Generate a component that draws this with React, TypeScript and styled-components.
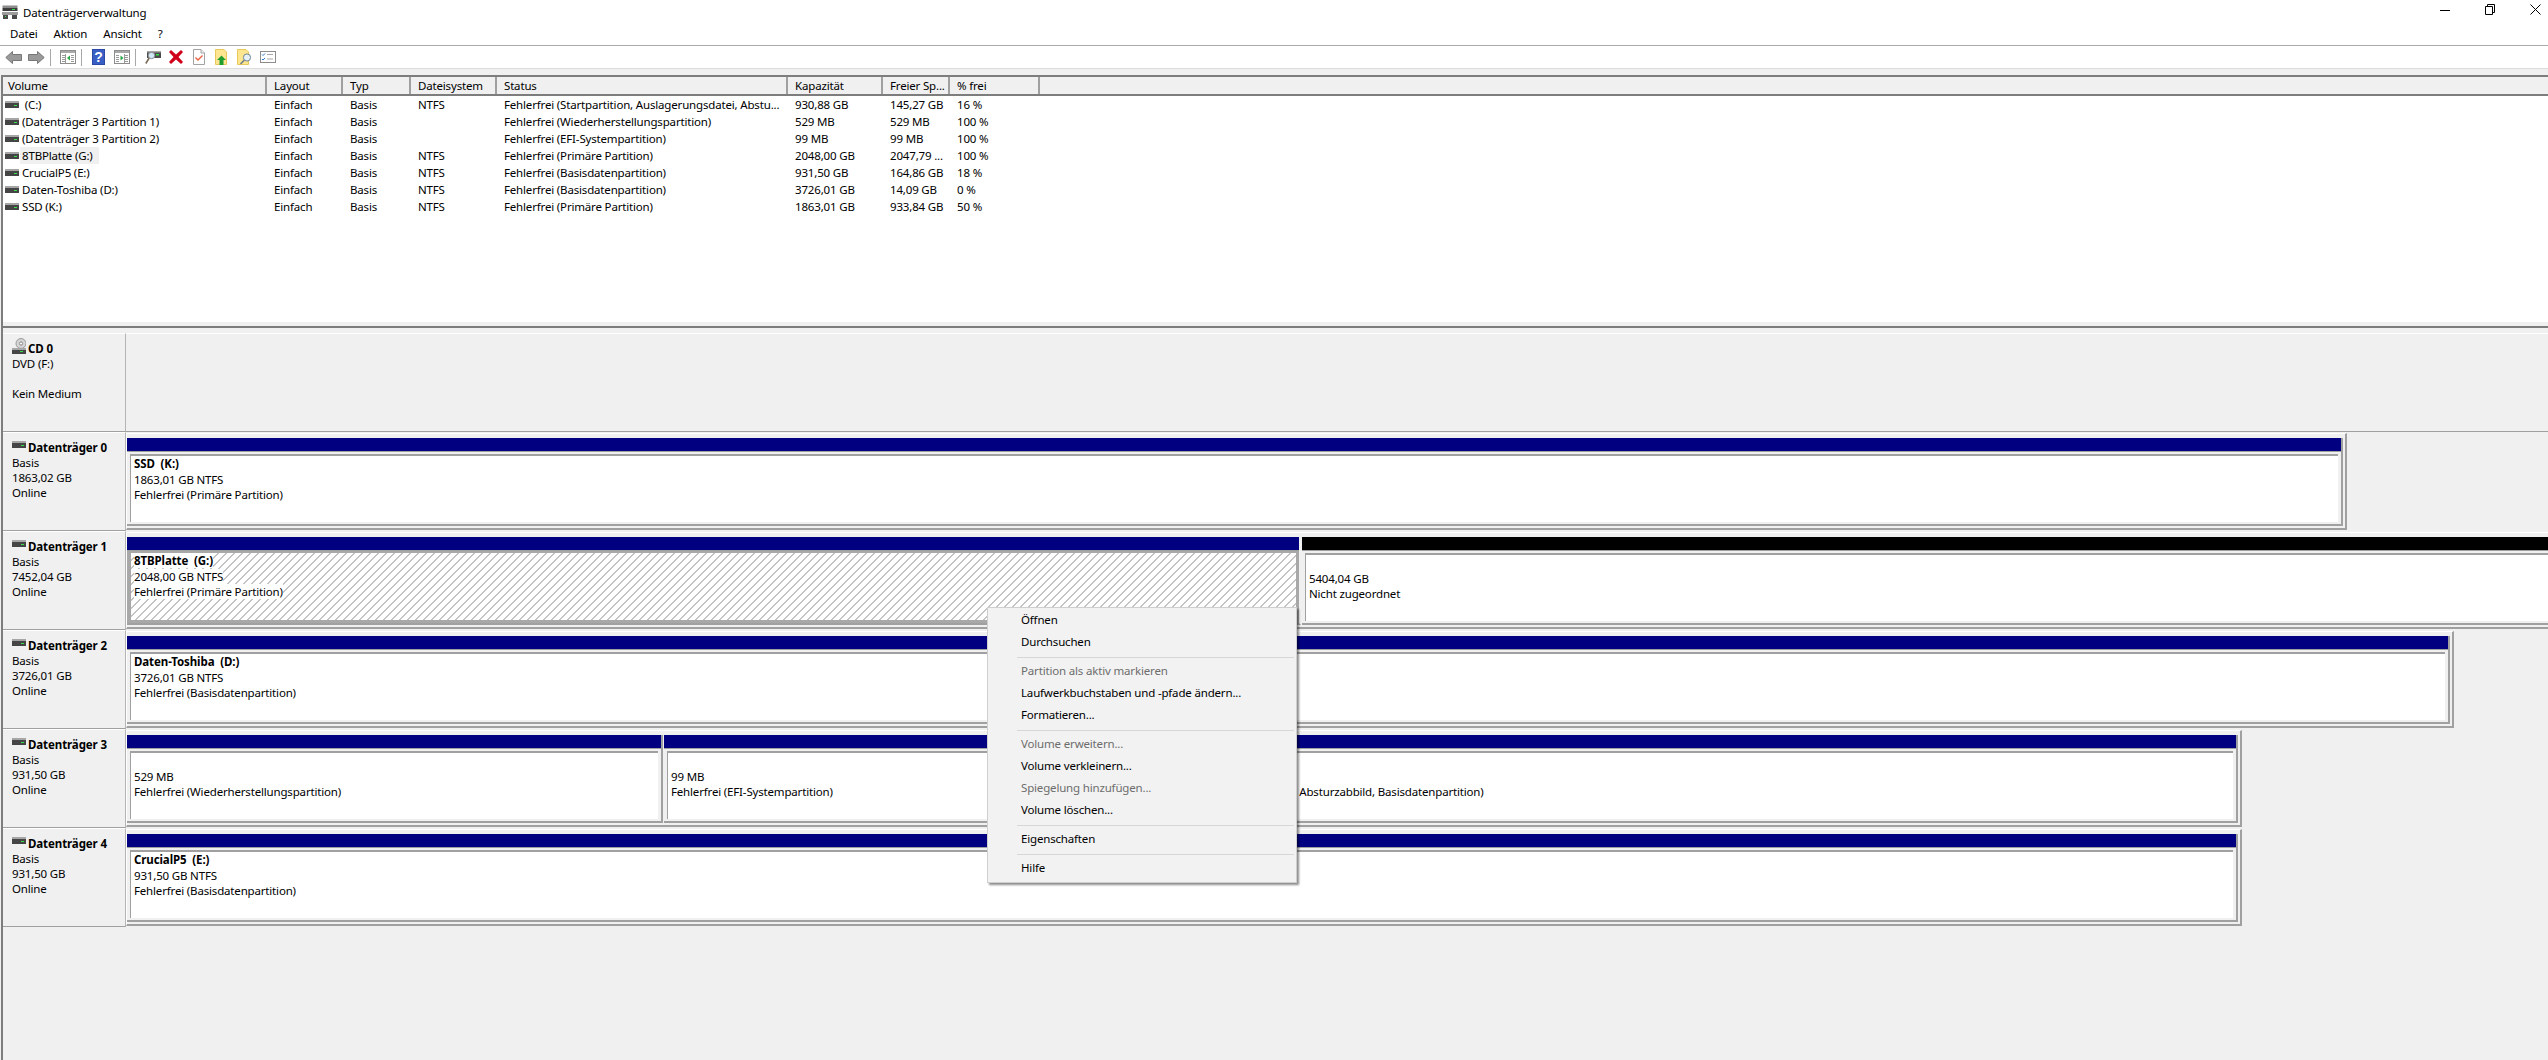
import React from "react";
import styled, { createGlobalStyle } from "styled-components";

const FONT = `"Noto Sans", "Open Sans", sans-serif`;
const LINE = "#a0a0a0";
const DARK = "#7d7d7d";
const PANEL = "#f0f0f0";

const Global = createGlobalStyle`
  html, body { margin: 0; padding: 0; background: ${PANEL}; overflow: hidden; }
  * { box-sizing: border-box; }
  #root { width: 2548px; height: 1060px; }
`;

const Window = styled.div`
  position: relative;
  width: 2548px;
  height: 1060px;
  overflow: hidden;
  background: ${PANEL};
  color: #000;
  font: 11.5px/15px ${FONT};
  letter-spacing: -0.17px;
  display: flex;
  flex-direction: column;
`;

const TitleBar = styled.div`
  height: 24px;
  background: #fff;
  display: flex;
  align-items: center;
  padding: 0 5px 0 2px;
  gap: 5px;
`;
const TitleText = styled.span`
  flex: 1;
`;
const WinButtons = styled.div`
  display: flex;
  gap: 29px;
  height: 24px;
`;
const WinButton = styled.div`
  width: 16px;
  height: 24px;
  display: flex;
  align-items: flex-start;
  justify-content: center;
  padding-top: 4px;
`;
const MenuBar = styled.div`
  height: 22px;
  background: #fff;
  border-bottom: 1px solid #ababab;
  display: flex;
  gap: 16px;
  padding: 2px 0 0 10px;
`;
const MenuLabel = styled.span``;

const Toolbar = styled.div`
  height: 23px;
  background: #fff;
  border-bottom: 1px solid #dcdcdc;
  display: flex;
  align-items: center;
  padding-left: 2px;
`;
const ToolButton = styled.div`
  width: 23px;
  height: 22px;
  display: flex;
  align-items: center;
  justify-content: center;
`;
const ToolSep = styled.div`
  width: 1px;
  height: 17px;
  background: #a8a8a8;
  margin: 0 5px 0 2px;
`;

const Body = styled.div`
  flex: 1;
  margin: 6px 0 0 1px;
  border-left: 2px solid ${DARK};
  border-top: 2px solid ${DARK};
  display: flex;
  flex-direction: column;
  min-height: 0;
`;
const ListPane = styled.div`
  height: 245px;
  background: #fff;
  display: flex;
  flex-direction: column;
`;
const Header = styled.div`
  height: 19px;
  background: ${PANEL};
  border-bottom: 2px solid ${DARK};
  display: flex;
`;
const HeaderCell = styled.div<{ $w: number }>`
  width: ${(p) => p.$w}px;
  flex: none;
  padding-left: ${(p) => (p.$w > 200 && p.$w < 280 ? 5 : 7)}px;
  border-right: 2px solid ${LINE};
  line-height: 18px;
  white-space: nowrap;
`;
const Rows = styled.div``;
const Row = styled.div`
  height: 17px;
  display: flex;
  align-items: center;
`;
const Cell = styled.div<{ $w: number }>`
  width: ${(p) => p.$w}px;
  flex: none;
  padding-left: 7px;
  white-space: pre;
`;
const VolumeCell = styled.div<{ $w: number }>`
  width: ${(p) => p.$w}px;
  flex: none;
  padding-left: 2px;
  display: flex;
  align-items: center;
  white-space: pre;
`;
const VolumeName = styled.span<{ $selected?: boolean }>`
  margin-left: 1px;
  padding: 1px 6px 1px 2px;
  background: ${(p) => (p.$selected ? PANEL : "transparent")};
`;

const Splitter = styled.div`
  height: 11px;
  padding-top: 4px;
  &::before {
    content: "";
    display: block;
    height: 2px;
    background: ${DARK};
  }
`;

const DiskPane = styled.div`
  flex: 1;
  display: flex;
  flex-direction: column;
`;
const DiskRow = styled.div`
  height: 99px;
  display: flex;
  flex: none;
`;
const DiskLabel = styled.div`
  width: 123px;
  flex: none;
  border-top: 1px solid #fff;
  border-right: 1px solid #b4b4b4;
  border-bottom: 1px solid ${LINE};
  padding: 7px 0 0 9px;
`;
const DiskTitle = styled.div`
  display: flex;
  align-items: center;
  font-weight: 700;
  gap: 2px;
  height: 16px;
  margin-top: -1px;
  letter-spacing: -0.1px;
`;
const TitleIcon = styled.span<{ $cd?: boolean }>`
  display: flex;
  align-self: flex-start;
  margin-top: ${(p) => (p.$cd ? -2 : 2)}px;
`;
const DiskLine = styled.div`
  height: 15px;
  white-space: pre;
`;
const DiskArea = styled.div<{ $empty?: boolean }>`
  flex: 1;
  min-width: 0;
  overflow: hidden;
  border-top: ${(p) => (p.$empty ? "1px solid #fff" : "0")};
  border-bottom: ${(p) => (p.$empty ? `1px solid ${LINE}` : "0")};
`;
const Frame = styled.div`
  display: inline-flex;
  margin-top: 1px;
  height: 97px;
  border-top: 1px solid #fff;
  border-left: 1px solid #fff;
  border-right: 2px solid ${LINE};
  border-bottom: 2px solid ${LINE};
  padding: 4px 2px 2px 0;
`;
const Partition = styled.div<{ $w: number; $selected?: boolean; $gap?: boolean }>`
  box-sizing: content-box;
  width: ${(p) => p.$w}px;
  flex: none;
  display: flex;
  flex-direction: column;
  border-right: 2px solid ${(p) => (p.$selected ? "transparent" : LINE)};
  border-bottom: 2px solid ${LINE};
  margin-right: ${(p) => (p.$gap ? 1 : 0)}px;
`;
const PartitionBar = styled.div<{ $free?: boolean }>`
  height: 14px;
  flex: none;
  background: ${(p) => (p.$free ? "#000" : "#000080")};
  border-bottom: 1px solid ${LINE};
`;
const PartitionBox = styled.div<{ $selected?: boolean }>`
  flex: 1;
  min-height: 0;
  overflow: hidden;
  white-space: pre;
  margin: ${(p) => (p.$selected ? "0" : "2px 3px 2px 3px")};
  border-style: solid;
  border-color: ${(p) => (p.$selected ? "#a8a8a8" : LINE)};
  border-width: ${(p) => (p.$selected ? "2px 3px 3px 4px" : "2px 0 0 1px")};
  padding: 1px 0 0 3px;
  background-color: #fff;
  background-image: ${(p) =>
    p.$selected
      ? "linear-gradient(-45deg, #c4c4c4 12.5%, #fff 12.5%, #fff 50%, #c4c4c4 50%, #c4c4c4 62.5%, #fff 62.5%, #fff 100%)"
      : "none"};
  background-size: 8px 8px;
`;
const PartitionLine = styled.div<{ $bold?: boolean }>`
  height: ${(p) => (p.$bold ? 16 : 15)}px;
  margin-top: ${(p) => (p.$bold ? -1 : 0)}px;
`;
const PartitionText = styled.span<{ $bold?: boolean }>`
  background: #fff;
  font-weight: ${(p) => (p.$bold ? 700 : 400)};
  letter-spacing: ${(p) => (p.$bold ? "-0.1px" : "inherit")};
`;

const ContextMenu = styled.div`
  position: absolute;
  left: 987px;
  top: 607px;
  width: 310px;
  height: 276px;
  background: #f2f2f2;
  border: 1px solid #cfcfcf;
  box-shadow: 2px 2px 2px rgba(0, 0, 0, 0.45);
  padding: 2px 2px 0 0;
`;
const MenuEntry = styled.div<{ $disabled?: boolean }>`
  height: 22px;
  line-height: 20px;
  padding-left: 33px;
  color: ${(p) => (p.$disabled ? "#6d6d6d" : "#000")};
`;
const MenuSep = styled.div`
  height: 7px;
  margin-left: 29px;
  padding-top: 3px;
  &::before {
    content: "";
    display: block;
    height: 1px;
    background: #d7d7d7;
  }
`;

/* ---------- drawings ---------- */
const DiskIcon = () => (
  <svg width="14" height="7" viewBox="0 0 14 7">
    <rect width="14" height="2" fill="#a6a6a6" />
    <rect y="2" width="14" height="5" fill="#454545" />
    <rect x="9" y="4" width="3" height="1" fill="#35e04a" />
  </svg>
);
const CdIcon = () => (
  <svg width="14" height="16" viewBox="0 0 14 16">
    <circle cx="9" cy="5.5" r="5" fill="#d4d4d4" stroke="#9a9a9a" />
    <circle cx="9" cy="5.5" r="1.6" fill="#fafafa" stroke="#8a8a8a" />
    <rect x="0" y="10" width="14" height="2" fill="#a6a6a6" />
    <rect x="0" y="12" width="14" height="4" fill="#454545" />
    <rect x="8" y="13" width="3" height="1" fill="#35e04a" />
  </svg>
);
const AppIcon = () => (
  <svg width="16" height="14" viewBox="0 0 16 14">
    <rect x="0.5" y="0.5" width="15" height="2.5" fill="#8c8c8c" />
    <rect x="0.5" y="3" width="15" height="3" fill="#3c3c3c" />
    <rect x="10" y="4" width="3" height="1" fill="#35e04a" />
    <rect x="0" y="7" width="16" height="3" fill="#9c9c9c" />
    <rect x="1" y="10" width="5" height="4" fill="#4a4a4a" />
    <rect x="10" y="10" width="5" height="4" fill="#4a4a4a" />
    <rect x="3" y="11" width="1" height="1" fill="#35e04a" />
  </svg>
);
const ArrowIcon = ({ flip }: { flip?: boolean }) => (
  <svg width="17" height="13" viewBox="0 0 17 13" style={flip ? { transform: "scaleX(-1)" } : undefined}>
    <path d="M7.5 .5 L.8 6.5 L7.5 12.5 V9.5 H16.5 V3.5 H7.5 Z" fill="#9a9a9a" stroke="#777" />
  </svg>
);
const PaneIcon = ({ right }: { right?: boolean }) => (
  <svg width="16" height="14" viewBox="0 0 16 14">
    <rect x=".5" y=".5" width="15" height="13" fill="#fff" stroke="#8d8d8d" />
    <rect x="1" y="1" width="14" height="2" fill="#a9a9a9" />
    <path
      d={right ? "M2 5.500h3M2 7.500h3M2 9.500h3M2 11.500h3M11 5.500h3M11 7.500h3M11 9.500h3M11 11.500h3M10.500 4v9" : "M2 5.500h3M2 7.500h3M2 9.500h3M2 11.500h3M11 5.500h3M11 7.500h3M11 9.500h3M11 11.500h3M5.500 4v9"}
      stroke="#9a9a9a"
      fill="none"
    />
    <path d={right ? "M6.500 5.500l3 2.500-3 2.500z" : "M10 5.500l-3 2.500 3 2.500z"} fill="#27a844" />
  </svg>
);
const HelpIcon = () => (
  <svg width="13" height="16" viewBox="0 0 13 16">
    <rect width="13" height="16" fill="#2a4aa8" />
    <rect x="1" y="1" width="11" height="14" fill="#3a5fc4" />
    <text x="6.500" y="13" fontSize="14" fontWeight="700" fill="#fff" textAnchor="middle" fontFamily="Liberation Sans">?</text>
  </svg>
);
const DiskSearchIcon = () => (
  <svg width="16" height="15" viewBox="0 0 16 15">
    <rect x="2" y="1" width="14" height="7" fill="#4a4a4a" />
    <rect x="2" y="1" width="14" height="1.500" fill="#a6a6a6" />
    <rect x="11" y="4" width="3" height="1.500" fill="#35e04a" />
    <circle cx="6.500" cy="5.500" r="3.200" fill="#cfe7f7" stroke="#8d8d8d" />
    <path d="M4.200 8L.8 13.500" stroke="#7a6a5a" strokeWidth="1.600" />
  </svg>
);
const DeleteIcon = () => (
  <svg width="14" height="14" viewBox="0 0 14 14">
    <path d="M0 2L2 0 7 4.500 12 0 14 2 9.500 7 14 12 12 14 7 9.500 2 14 0 12 4.500 7z" fill="#d0021b" />
  </svg>
);
const DocCheckIcon = () => (
  <svg width="12" height="16" viewBox="0 0 12 16">
    <path d="M.5.5H8L11.500 4V15.500H.5Z" fill="#fff" stroke="#a3a3a3" />
    <path d="M8 .5V4H11.500" fill="#eee" stroke="#a3a3a3" />
    <path d="M2.500 8.500L5 11 9.500 6.500" fill="none" stroke="#e8603c" strokeWidth="1.400" />
  </svg>
);
const FolderBase = () => (
  <path d="M.5.5H9L11.500 3V15.500H.5Z" fill="#fde68f" stroke="#e8c85a" />
);
const FolderUpIcon = () => (
  <svg width="13" height="16" viewBox="0 0 13 16">
    <FolderBase />
    <path d="M6.500 6.500L11 11H8.500V16H4.500V11H2Z" fill="#1f9d2e" />
  </svg>
);
const FolderSearchIcon = () => (
  <svg width="15" height="16" viewBox="0 0 15 16">
    <FolderBase />
    <circle cx="10" cy="8.500" r="3.600" fill="#e7f0f6" stroke="#6f8696" />
    <path d="M7.200 11.300L3.500 15" stroke="#6f7e88" strokeWidth="1.600" />
  </svg>
);
const ChecklistIcon = () => (
  <svg width="16" height="12" viewBox="0 0 16 12">
    <rect x=".5" y=".5" width="15" height="11" fill="#fff" stroke="#8d8d8d" />
    <path d="M2 3.500l1 1 2-2M2 8l1 1 2-2" fill="none" stroke="#2b79d1" />
    <path d="M7 3.500h6M7 8h6" stroke="#a8a8a8" />
  </svg>
);
const MinimizeIcon = () => (
  <svg width="10" height="12" viewBox="0 0 10 12">
    <path d="M0 6.500H10" stroke="#000" />
  </svg>
);
const RestoreIcon = () => (
  <svg width="10" height="11" viewBox="0 0 10 11">
    <path d="M.5 2.500h7v8h-7z M2.500 2.500v-2h7v8h-2" fill="none" stroke="#000" />
  </svg>
);
const CloseIcon = () => (
  <svg width="11" height="11" viewBox="0 0 11 11">
    <path d="M.5.5l10 10M10.500.5l-10 10" stroke="#000" />
  </svg>
);

/* ---------- data ---------- */
const COLS = [264, 76, 68, 86, 291, 95, 67, 90];
const HEADS = ["Volume", "Layout", "Typ", "Dateisystem", "Status", "Kapazität", "Freier Sp...", "% frei"];
const VOLUMES: string[][] = [
  [" (C:)", "Einfach", "Basis", "NTFS", "Fehlerfrei (Startpartition, Auslagerungsdatei, Abstu...", "930,88 GB", "145,27 GB", "16 %"],
  ["(Datenträger 3 Partition 1)", "Einfach", "Basis", "", "Fehlerfrei (Wiederherstellungspartition)", "529 MB", "529 MB", "100 %"],
  ["(Datenträger 3 Partition 2)", "Einfach", "Basis", "", "Fehlerfrei (EFI-Systempartition)", "99 MB", "99 MB", "100 %"],
  ["8TBPlatte (G:)", "Einfach", "Basis", "NTFS", "Fehlerfrei (Primäre Partition)", "2048,00 GB", "2047,79 ...", "100 %"],
  ["CrucialP5 (E:)", "Einfach", "Basis", "NTFS", "Fehlerfrei (Basisdatenpartition)", "931,50 GB", "164,86 GB", "18 %"],
  ["Daten-Toshiba (D:)", "Einfach", "Basis", "NTFS", "Fehlerfrei (Basisdatenpartition)", "3726,01 GB", "14,09 GB", "0 %"],
  ["SSD (K:)", "Einfach", "Basis", "NTFS", "Fehlerfrei (Primäre Partition)", "1863,01 GB", "933,84 GB", "50 %"],
];

type Part = { w: number; name?: string; size: string; status: string; free?: boolean; selected?: boolean };
type Disk = { title: string; lines: string[]; parts: Part[] };
const DISKS: Disk[] = [
  {
    title: "Datenträger 0",
    lines: ["Basis", "1863,02 GB", "Online"],
    parts: [{ w: 2214, name: "SSD  (K:)", size: "1863,01 GB NTFS", status: "Fehlerfrei (Primäre Partition)" }],
  },
  {
    title: "Datenträger 1",
    lines: ["Basis", "7452,04 GB", "Online"],
    parts: [
      { w: 1172, name: "8TBPlatte  (G:)", size: "2048,00 GB NTFS", status: "Fehlerfrei (Primäre Partition)", selected: true },
      { w: 1300, size: "5404,04 GB", status: "Nicht zugeordnet", free: true },
    ],
  },
  {
    title: "Datenträger 2",
    lines: ["Basis", "3726,01 GB", "Online"],
    parts: [{ w: 2321, name: "Daten-Toshiba  (D:)", size: "3726,01 GB NTFS", status: "Fehlerfrei (Basisdatenpartition)" }],
  },
  {
    title: "Datenträger 3",
    lines: ["Basis", "931,50 GB", "Online"],
    parts: [
      { w: 534, size: "529 MB", status: "Fehlerfrei (Wiederherstellungspartition)" },
      { w: 389, size: "99 MB", status: "Fehlerfrei (EFI-Systempartition)" },
      { w: 1180, name: " (C:)", size: "930,88 GB NTFS", status: "Fehlerfrei (Startpartition, Auslagerungsdatei, Absturzabbild, Basisdatenpartition)" },
    ],
  },
  {
    title: "Datenträger 4",
    lines: ["Basis", "931,50 GB", "Online"],
    parts: [{ w: 2109, name: "CrucialP5  (E:)", size: "931,50 GB NTFS", status: "Fehlerfrei (Basisdatenpartition)" }],
  },
];

type Entry = { label?: string; disabled?: boolean };
const MENU: Entry[] = [
  { label: "Öffnen" },
  { label: "Durchsuchen" },
  {},
  { label: "Partition als aktiv markieren", disabled: true },
  { label: "Laufwerkbuchstaben und -pfade ändern..." },
  { label: "Formatieren..." },
  {},
  { label: "Volume erweitern...", disabled: true },
  { label: "Volume verkleinern..." },
  { label: "Spiegelung hinzufügen...", disabled: true },
  { label: "Volume löschen..." },
  {},
  { label: "Eigenschaften" },
  {},
  { label: "Hilfe" },
];

export default function App() {
  return (
    <Window>
      <Global />
      <TitleBar>
        <AppIcon />
        <TitleText>Datenträgerverwaltung</TitleText>
        <WinButtons>
          <WinButton><MinimizeIcon /></WinButton>
          <WinButton><RestoreIcon /></WinButton>
          <WinButton><CloseIcon /></WinButton>
        </WinButtons>
      </TitleBar>
      <MenuBar>
        {["Datei", "Aktion", "Ansicht", "?"].map((m) => (
          <MenuLabel key={m}>{m}</MenuLabel>
        ))}
      </MenuBar>
      <Toolbar>
        <ToolButton><ArrowIcon /></ToolButton>
        <ToolButton><ArrowIcon flip /></ToolButton>
        <ToolSep />
        <ToolButton><PaneIcon /></ToolButton>
        <ToolSep />
        <ToolButton><HelpIcon /></ToolButton>
        <ToolButton><PaneIcon right /></ToolButton>
        <ToolSep />
        <ToolButton><DiskSearchIcon /></ToolButton>
        <ToolButton><DeleteIcon /></ToolButton>
        <ToolButton><DocCheckIcon /></ToolButton>
        <ToolButton><FolderUpIcon /></ToolButton>
        <ToolButton><FolderSearchIcon /></ToolButton>
        <ToolButton><ChecklistIcon /></ToolButton>
      </Toolbar>
      <Body>
        <ListPane>
          <Header>
            {HEADS.map((h, i) => (
              <HeaderCell key={h} $w={COLS[i]}>{h}</HeaderCell>
            ))}
          </Header>
          <Rows>
            {VOLUMES.map((v) => (
              <Row key={v[0]}>
                <VolumeCell $w={COLS[0]}>
                  <DiskIcon />
                  <VolumeName $selected={v[0].startsWith("8TB")}>{v[0]}</VolumeName>
                </VolumeCell>
                {v.slice(1).map((c, i) => (
                  <Cell key={i} $w={COLS[i + 1]}>{c}</Cell>
                ))}
              </Row>
            ))}
          </Rows>
        </ListPane>
        <Splitter />
        <DiskPane>
          <DiskRow>
            <DiskLabel>
              <DiskTitle><TitleIcon $cd><CdIcon /></TitleIcon>CD 0</DiskTitle>
              <DiskLine>DVD (F:)</DiskLine>
              <DiskLine> </DiskLine>
              <DiskLine>Kein Medium</DiskLine>
            </DiskLabel>
            <DiskArea $empty />
          </DiskRow>
          {DISKS.map((d) => (
            <DiskRow key={d.title}>
              <DiskLabel>
                <DiskTitle><TitleIcon><DiskIcon /></TitleIcon>{d.title}</DiskTitle>
                {d.lines.map((l) => (
                  <DiskLine key={l}>{l}</DiskLine>
                ))}
              </DiskLabel>
              <DiskArea>
                <Frame>
                  {d.parts.map((p, i) => (
                    <Partition key={i} $w={p.w} $selected={p.selected} $gap={i < d.parts.length - 1}>
                      <PartitionBar $free={p.free} />
                      <PartitionBox $selected={p.selected}>
                        <PartitionLine $bold={!!p.name}>
                          {p.name ? <PartitionText $bold>{p.name}</PartitionText> : " "}
                        </PartitionLine>
                        <PartitionLine><PartitionText>{p.size}</PartitionText></PartitionLine>
                        <PartitionLine><PartitionText>{p.status}</PartitionText></PartitionLine>
                      </PartitionBox>
                    </Partition>
                  ))}
                </Frame>
              </DiskArea>
            </DiskRow>
          ))}
        </DiskPane>
      </Body>
      <ContextMenu>
        {MENU.map((m, i) =>
          m.label ? (
            <MenuEntry key={i} $disabled={m.disabled}>{m.label}</MenuEntry>
          ) : (
            <MenuSep key={i} />
          )
        )}
      </ContextMenu>
    </Window>
  );
}
